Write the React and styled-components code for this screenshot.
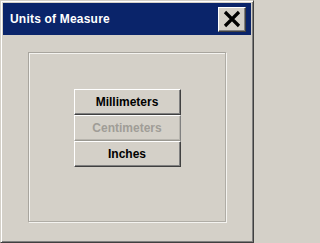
import React from "react";
import styled, { createGlobalStyle } from "styled-components";

const Global = createGlobalStyle`
  html, body { margin: 0; padding: 0; background: #d4d0c8; }
  * { box-sizing: border-box; }
`;

const Window = styled.div`
  width: 254px;
  height: 243px;
  background: #d4d0c8;
  border-top: 1px solid #d4d0c8;
  border-left: 1px solid #d4d0c8;
  border-right: 1px solid #404040;
  border-bottom: 1px solid #404040;
  box-shadow: inset 1px 1px #ffffff, inset -1px -1px #808080;
  padding: 2px;
  display: flex;
  flex-direction: column;
  font-family: "Liberation Sans", Arial, sans-serif;
`;

const TitleBar = styled.div`
  height: 32px;
  background: #0a246a;
  display: flex;
  align-items: center;
  justify-content: space-between;
  padding: 0 5px 0 7px;
`;

const Title = styled.span`
  color: #ffffff;
  font-weight: bold;
  font-size: 12px;
  letter-spacing: 0.2px;
`;

const CloseButton = styled.button`
  width: 28px;
  height: 25px;
  padding: 0;
  margin: 0;
  background: #d4d0c8;
  border-top: 1px solid #ffffff;
  border-left: 1px solid #ffffff;
  border-right: 1px solid #404040;
  border-bottom: 1px solid #404040;
  box-shadow: inset -1px -1px #808080;
  display: flex;
  align-items: center;
  justify-content: center;
`;

const Body = styled.div`
  flex: 1;
  padding: 17px 25px 18px 25px;
  display: flex;
`;

const Panel = styled.div`
  flex: 1;
  border-top: 1px solid #a8a59e;
  border-left: 1px solid #a8a59e;
  border-right: 1px solid #b0ada6;
  border-bottom: 1px solid #b0ada6;
  box-shadow: inset 1px 1px #f4f3f0, 1px 1px #f4f3f0;
  display: flex;
  flex-direction: column;
  align-items: center;
  padding-top: 36px;
`;

const ButtonStack = styled.div`
  display: flex;
  flex-direction: column;
  width: 107px;
`;

const OptionButton = styled.button`
  height: 26px;
  width: 100%;
  margin: 0;
  padding: 0;
  background: #d4d0c8;
  font-family: "Liberation Sans", Arial, sans-serif;
  font-weight: bold;
  font-size: 12px;
  color: ${(p) => (p.$disabled ? "#a09d97" : "#000000")};
  border-top: 1px solid #ffffff;
  border-left: 1px solid #ffffff;
  border-right: 1px solid ${(p) => (p.$disabled ? "#808080" : "#404040")};
  border-bottom: 1px solid ${(p) => (p.$disabled ? "#9a9891" : "#404040")};
  box-shadow: inset -1px -1px ${(p) => (p.$disabled ? "#b8b5ae" : "#808080")};
  cursor: pointer;
`;

const CloseIcon = () => (
  <svg width="18" height="18" viewBox="0 0 18 18">
    <path d="M2 2 L16 16 M16 2 L2 16" stroke="#000" strokeWidth="3.2" strokeLinecap="butt" />
  </svg>
);

export default function App() {
  return (
    <>
      <Global />
      <Window>
        <TitleBar>
          <Title>Units of Measure</Title>
          <CloseButton aria-label="Close">
            <CloseIcon />
          </CloseButton>
        </TitleBar>
        <Body>
          <Panel>
            <ButtonStack>
              <OptionButton>Millimeters</OptionButton>
              <OptionButton $disabled>Centimeters</OptionButton>
              <OptionButton>Inches</OptionButton>
            </ButtonStack>
          </Panel>
        </Body>
      </Window>
    </>
  );
}
